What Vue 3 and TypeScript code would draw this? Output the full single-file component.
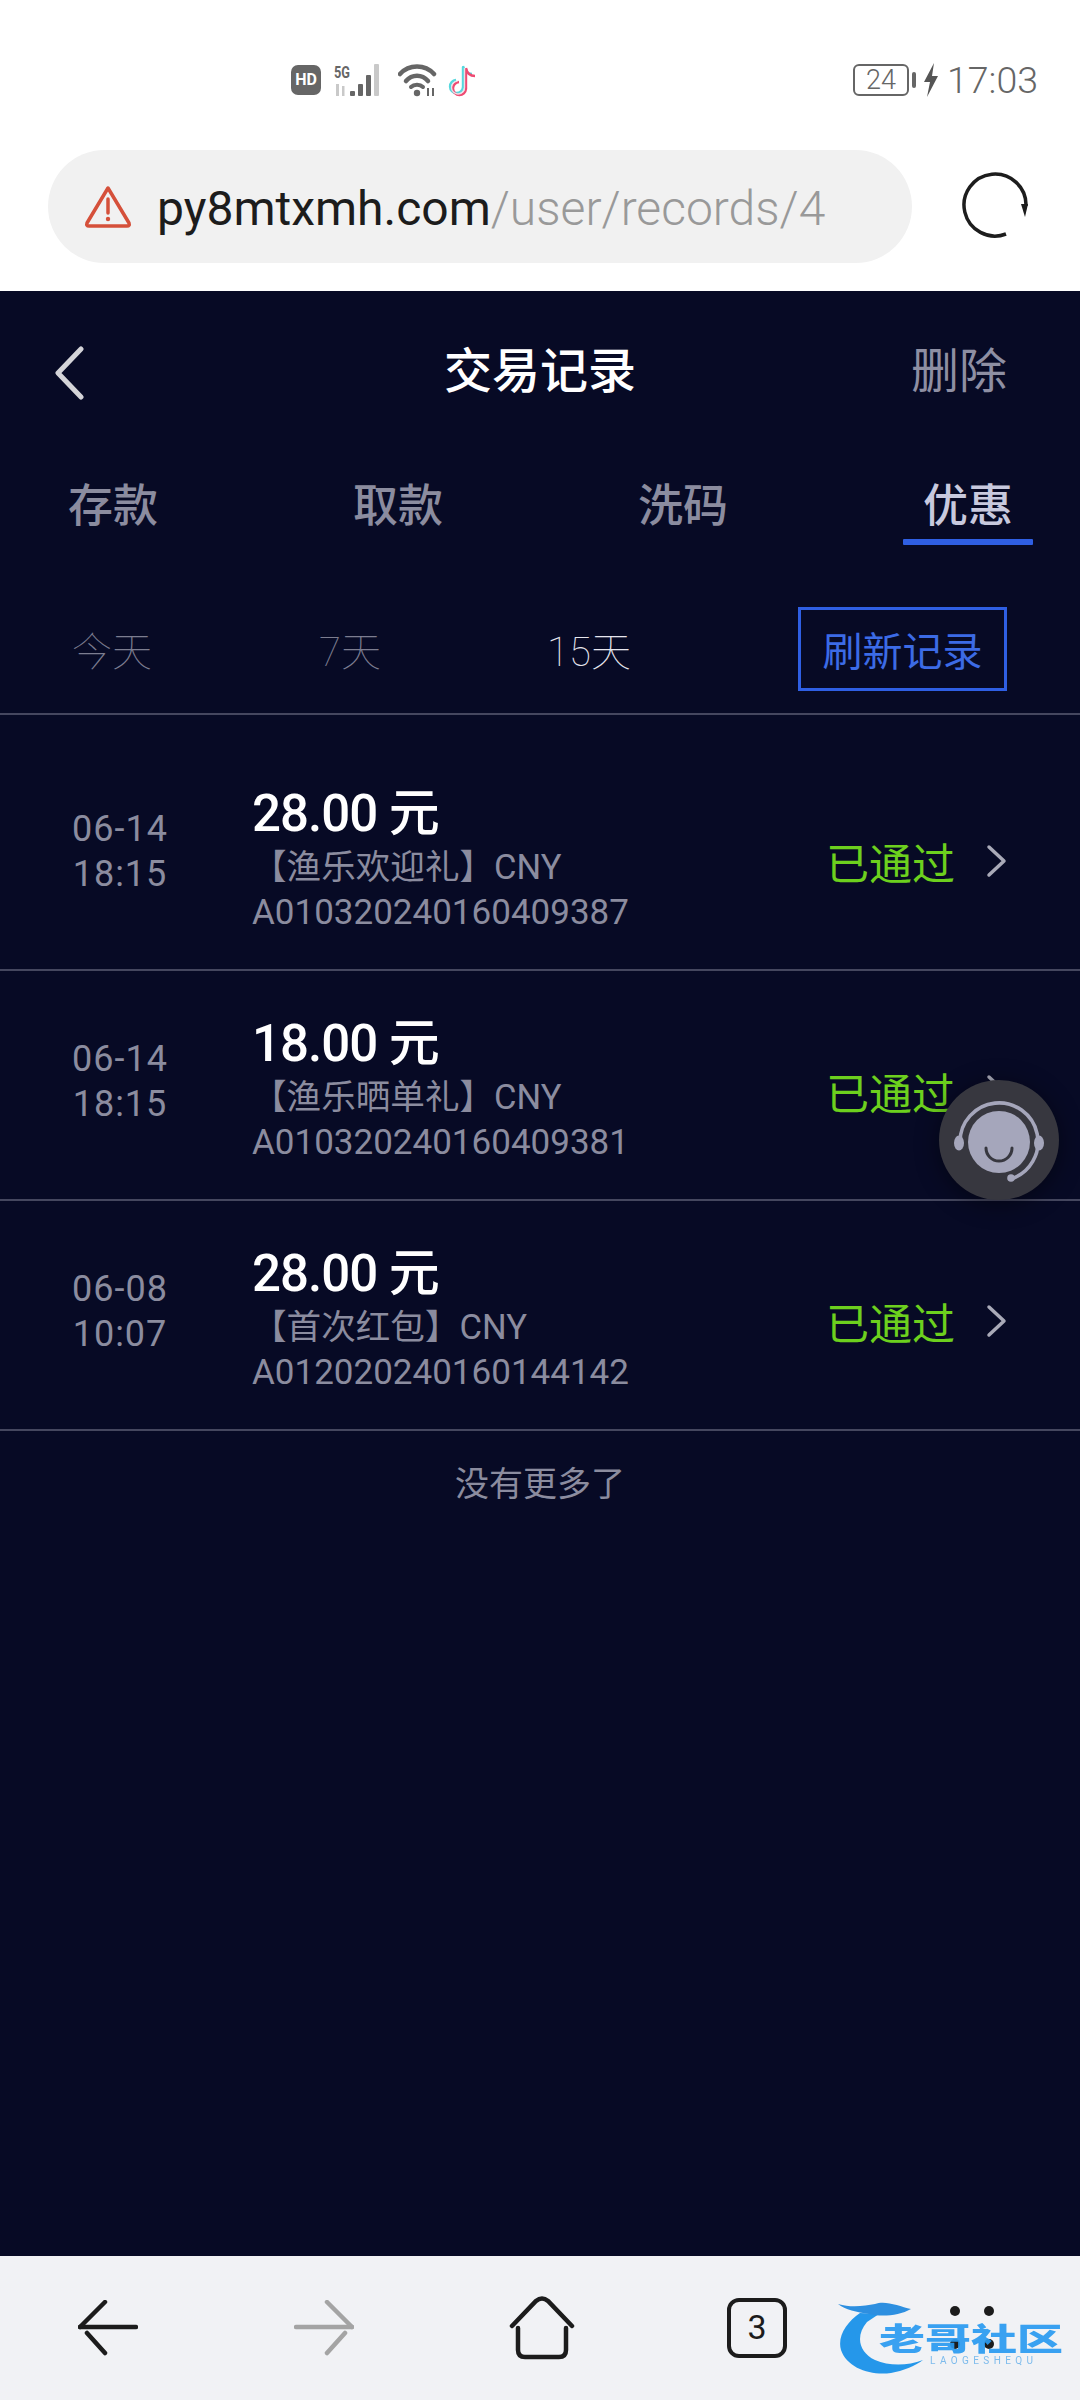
<script setup lang="ts">
interface RecordRow {
  date: string
  time: string
  amount: string
  name: string
  code: string
}

const tabs = ['存款', '取款', '洗码', '优惠']
const activeTab = '优惠'

const ranges = [
  { label: '今天', on: false },
  { label: '7天', on: false },
  { label: '15天', on: true },
]

const rows: RecordRow[] = [
  { date: '06-14', time: '18:15', amount: '28.00 元', name: '【渔乐欢迎礼】CNY', code: 'A010320240160409387' },
  { date: '06-14', time: '18:15', amount: '18.00 元', name: '【渔乐晒单礼】CNY', code: 'A010320240160409381' },
  { date: '06-08', time: '10:07', amount: '28.00 元', name: '【首次红包】CNY', code: 'A012020240160144142' },
]
</script>

<template>
  <div class="page">
    <!-- 系统状态栏 -->
    <div class="status-bar">
      <div class="status-icons">
        <span class="hd">HD</span>
        <svg class="signal" width="52" height="36" viewBox="0 0 52 36">
          <text x="0" y="16" font-size="16" font-weight="700" fill="#666" font-family="Roboto, sans-serif" textLength="16" lengthAdjust="spacingAndGlyphs">5G</text>
          <g fill="#c9c9c9">
            <rect x="2" y="22" width="3" height="12" />
            <rect x="8" y="24" width="2.5" height="10" />
          </g>
          <rect x="16" y="29" width="5" height="5" rx="1" fill="#666" />
          <rect x="24" y="22" width="5" height="12" rx="1" fill="#666" />
          <rect x="32" y="13" width="5" height="21" rx="1" fill="#666" />
          <rect x="40" y="2" width="5" height="32" rx="1" fill="#c9c9c9" />
        </svg>
        <svg class="wifi" width="40" height="34" viewBox="0 0 40 34" fill="none" stroke="#666" stroke-linecap="round">
          <path d="M2 11 C11 1 27 1 36 11" stroke-width="4.5" />
          <path d="M8 18 C14 11 24 11 30 18" stroke-width="4.5" />
          <path d="M13 24 C16 21 22 21 25 24" stroke-width="4" />
          <circle cx="19" cy="30" r="3.2" fill="#666" stroke="none" />
          <path d="M30 25 V33 M35 25 V33" stroke-width="2" stroke-linecap="butt" />
        </svg>
        <svg class="tiktok" width="28" height="34" viewBox="0 0 28 34" fill="none" stroke-width="2.4">
          <path d="M15 4 V24 A6.5 6.5 0 1 1 8 17" stroke="#55d8de" />
          <path d="M15 3 C16 8 19 11 24 11" stroke="#55d8de" />
          <path d="M18 6 V26 A6.5 6.5 0 1 1 11 19" stroke="#ee4a72" />
          <path d="M18 5 C19 10 22 13 27 13" stroke="#ee4a72" />
          <path d="M16.5 5 V25 A6.5 6.5 0 1 1 9.5 18" stroke="#e9dfe6" stroke-width="1.4" />
        </svg>
      </div>
      <div class="status-right">
        <span class="battery"><span class="battery-num">24</span></span>
        <span class="battery-cap"></span>
        <svg class="bolt" width="16" height="34" viewBox="0 0 16 34">
          <path d="M11 0 L1 19 H7 L4 34 L15 13 H9 Z" fill="#555" />
        </svg>
        <span class="clock">17:03</span>
      </div>
    </div>

    <!-- 浏览器地址栏 -->
    <div class="address-bar">
      <div class="url-pill">
        <svg class="warn" width="48" height="44" viewBox="0 0 48 44" fill="none">
          <path d="M24 3 L45 38 Q46 41 43 41 H5 Q2 41 3 38 Z" stroke="#d5503a" stroke-width="3.5" stroke-linejoin="round" />
          <path d="M24 14 V28" stroke="#d5503a" stroke-width="3.5" stroke-linecap="round" />
          <circle cx="24" cy="34" r="2.2" fill="#d5503a" />
        </svg>
        <span class="url"><span class="url-host">py8mtxmh.com</span>/user/records/4</span>
      </div>
      <svg class="reload" width="70" height="70" viewBox="0 0 70 70" fill="none">
        <path d="M46 63 A31 31 0 1 1 66 35" stroke="#1d1d1d" stroke-width="3.5" />
        <path d="M61 33 H68 L65 46 Z" fill="#1d1d1d" />
      </svg>
    </div>

    <div class="content">
      <div class="nav">
        <svg class="back" width="36" height="54" viewBox="0 0 36 54" fill="none">
          <path d="M30 3 L7 27 L30 51" stroke="#d4d4d8" stroke-width="5" stroke-linecap="round" stroke-linejoin="round" />
        </svg>
        <span class="nav-title">交易记录</span>
        <span class="nav-action">删除</span>
      </div>

      <div class="tabs">
        <div v-for="tab in tabs" :key="tab" class="tab" :class="{ active: tab === activeTab }">
          <span>{{ tab }}</span>
          <i class="tab-line"></i>
        </div>
      </div>

      <div class="filters">
        <div class="ranges">
          <span v-for="r in ranges" :key="r.label" class="range" :class="{ on: r.on }">{{ r.label }}</span>
        </div>
        <button class="refresh" type="button">刷新记录</button>
      </div>

      <div class="list">
        <div v-for="row in rows" :key="row.code" class="row">
          <div class="when">
            <div>{{ row.date }}</div>
            <div>{{ row.time }}</div>
          </div>
          <div class="info">
            <div class="amount">{{ row.amount }}</div>
            <div class="name">{{ row.name }}</div>
            <div class="code">{{ row.code }}</div>
          </div>
          <span class="state">已通过</span>
          <svg class="arrow" width="24" height="36" viewBox="0 0 24 36" fill="none">
            <path d="M4 4 L19 18 L4 32" stroke="#a9aab8" stroke-width="3.5" stroke-linecap="round" stroke-linejoin="round" />
          </svg>
        </div>
      </div>

      <div class="no-more">没有更多了</div>
    </div>

    <!-- 浏览器底部工具栏 -->
    <div class="toolbar">
      <svg width="60" height="56" viewBox="0 0 60 56" fill="none" stroke="#1c1c1c" stroke-width="4.5" stroke-linecap="round" class="tool tool-back">
        <path d="M2 27 H58" />
        <path d="M2 27 L27 2" />
        <path d="M9 33 L27 53" />
      </svg>
      <svg width="60" height="56" viewBox="0 0 60 56" fill="none" stroke="#a4a4a4" stroke-width="4.5" stroke-linecap="round" class="tool tool-forward">
        <path d="M58 27 H2" />
        <path d="M58 27 L33 2" />
        <path d="M51 33 L33 53" />
      </svg>
      <svg width="66" height="64" viewBox="0 0 66 64" fill="none" stroke="#1c1c1c" stroke-width="4.5" stroke-linecap="round" class="tool tool-home">
        <path d="M3 30 L27 5 Q33 0 39 5 L63 30" />
        <path d="M9 32 V54 Q9 61 16 61 H50 Q57 61 57 54 V32" />
      </svg>
      <div class="tab-count">3</div>
    </div>

    <!-- 悬浮客服按钮 -->
    <div class="service">
      <svg width="120" height="120" viewBox="0 0 120 120" fill="none">
        <circle cx="60" cy="62" r="31" fill="#a5a6bb" />
        <path d="M21 62 A39 39 0 1 1 72 99" stroke="#a5a6bb" stroke-width="3.6" />
        <ellipse cx="20" cy="63" rx="5" ry="7.5" fill="#a5a6bb" />
        <ellipse cx="100" cy="63" rx="5" ry="7.5" fill="#a5a6bb" />
        <circle cx="72" cy="98" r="3.8" fill="#a5a6bb" />
        <path d="M47 68 A13 13 0 0 0 73 68" stroke="#37373f" stroke-width="3" stroke-linecap="round" />
      </svg>
    </div>

    <!-- 菜单四点与水印 -->
    <div class="menu-dots"><i></i><i></i><i></i><i></i></div>
    <div class="mark">
      <svg class="mark-dragon" width="125" height="78" viewBox="0 0 125 78" fill="none">
        <path d="M23 15 C10 24 0 38 4 52 C10 70 34 78 54 75 C66 73 78 68 86 62 C70 68 52 68 38 62 C22 54 18 38 30 24 L42 16 Z" fill="#2597ea" />
        <path d="M1 6 C14 10 28 8 38 6 C48 2 62 8 74 11 C62 18 44 19 32 16 C20 14 8 12 1 6 Z" fill="#2d8fe0" />
      </svg>
      <div class="mark-name">老哥社区</div>
      <div class="mark-sub">LAOGESHEQU</div>
    </div>
  </div>
</template>

<style scoped>
.page {
  position: relative;
  width: 1080px;
  height: 2400px;
  display: flex;
  flex-direction: column;
  overflow: hidden;
  background: #fff;
  font-family: Roboto, "Noto Sans CJK SC", sans-serif;
}

.status-bar {
  height: 150px;
  flex: none;
  box-sizing: border-box;
  padding: 62px 42px 0 291px;
  display: flex;
  justify-content: space-between;
  align-items: flex-start;
}
.status-icons {
  display: flex;
  align-items: center;
  height: 36px;
}
.hd {
  width: 30px;
  height: 30px;
  border-radius: 7px;
  background: #666;
  color: #fff;
  font-size: 16px;
  font-weight: 700;
  line-height: 30px;
  text-align: center;
  margin-right: 13px;
}
.signal { margin-right: 12px; }
.wifi { margin-right: 10px; }
.status-right {
  display: flex;
  align-items: center;
  height: 36px;
}
.battery {
  box-sizing: border-box;
  width: 56px;
  height: 32px;
  border: 2.5px solid #666;
  border-radius: 6px;
  display: flex;
  align-items: center;
  justify-content: center;
}
.battery-num {
  color: #666;
  font-size: 27px;
  font-weight: 300;
}
.battery-cap {
  width: 4px;
  height: 16px;
  background: #666;
  border-radius: 2px;
  margin: 0 7px 0 3px;
}
.bolt { margin-right: 8px; }
.clock {
  color: #666;
  font-size: 37.5px;
  font-weight: 300;
}

.address-bar {
  height: 141px;
  flex: none;
  display: flex;
  align-items: flex-start;
  padding: 0 50px 0 48px;
  justify-content: space-between;
}
.url-pill {
  width: 864px;
  height: 113px;
  box-sizing: border-box;
  padding-left: 36px;
  border-radius: 57px;
  background: #f1f1f1;
  display: flex;
  align-items: center;
}
.url {
  margin-left: 25px;
  padding-top: 3px;
  font-size: 48px;
  font-weight: 300;
  color: #999;
  white-space: nowrap;
}
.url-host {
  color: #1c1c1c;
  font-weight: 400;
}
.reload { margin-top: 21px; }

.content {
  flex: 1;
  background: #070a25;
  display: flex;
  flex-direction: column;
}

.nav {
  position: relative;
  box-sizing: border-box;
  height: 185px;
  padding: 0 73px 33px 48px;
  flex: none;
  display: flex;
  align-items: center;
  justify-content: flex-end;
}
.back {
  margin-top: 12px;
  margin-left: 3px;
  margin-right: auto;
}
.nav-title {
  position: absolute;
  left: 0;
  right: 0;
  text-align: center;
  color: #fff;
  font-size: 48px;
  font-weight: 500;
}
.nav-action {
  color: #8e8fa3;
  font-size: 48px;
}

.tabs {
  flex: none;
  display: flex;
  justify-content: space-between;
  padding: 0 47px 0 48px;
}
.tab {
  width: 130px;
  display: flex;
  flex-direction: column;
  align-items: center;
  color: #8b8c9f;
  font-size: 45px;
  font-weight: 500;
  line-height: 62px;
}
.tab-line {
  width: 100%;
  height: 6px;
  margin-top: 1px;
  border-radius: 1px;
}
.tab.active { color: #c8c9de; }
.tab.active .tab-line { background: #2f5fe3; }

.filters {
  flex: none;
  box-sizing: border-box;
  height: 170px;
  padding: 62px 73px 0 0;
  display: flex;
  align-items: flex-start;
  justify-content: space-between;
  border-bottom: 2px solid #45475f;
}
.ranges {
  display: grid;
  grid-template-columns: 224px 252px 226px;
  height: 84px;
  align-items: center;
}
.range {
  text-align: center;
  color: #7c7d90;
  font-size: 40px;
  font-weight: 100;
}
.range.on { color: #e6e6ee; }
.refresh {
  box-sizing: border-box;
  width: 209px;
  height: 84px;
  padding: 0;
  background: transparent;
  border: 3px solid #2f5fe3;
  color: #3c6be6;
  font-family: inherit;
  font-size: 40px;
}

.list {
  flex: none;
  padding-top: 26px;
}
.row {
  box-sizing: border-box;
  height: 230px;
  display: flex;
  align-items: center;
  padding-right: 71px;
  border-bottom: 2px solid #45475f;
}
.when {
  width: 240px;
  margin-right: 12px;
  padding-bottom: 6px;
  text-align: center;
  color: #8b8c9f;
  font-size: 36px;
  letter-spacing: 1px;
  line-height: 45px;
}
.info {
  flex: 1;
  min-width: 0;
  padding-top: 6px;
}
.amount {
  color: #fff;
  font-size: 51px;
  font-weight: 500;
  line-height: 63px;
  letter-spacing: -1px;
}
.name,
.code {
  color: #8b8c9f;
  line-height: 45px;
}
.name { font-size: 34.6px; }
.code { font-size: 35px; }
.state {
  margin-top: 12px;
  color: #6dd01e;
  font-size: 43px;
  margin-right: 30px;
}
.arrow {
  flex: none;
  margin-top: 12px;
}

.no-more {
  margin-top: 29px;
  text-align: center;
  color: #8b8c9f;
  font-size: 34px;
  line-height: 48px;
}

.toolbar {
  height: 144px;
  flex: none;
  background: #f1f2f5;
  display: flex;
  align-items: center;
  padding-left: 78px;
}
.tool { flex: none; }
.tool-forward { margin-left: 156px; }
.tool-home { margin: 0 0 0 155px; }
.tab-count {
  box-sizing: border-box;
  width: 60px;
  height: 60px;
  margin-left: 152px;
  border: 4.5px solid #1c1c1c;
  border-radius: 12px;
  color: #1c1c1c;
  font-size: 34px;
  line-height: 51px;
  text-align: center;
}

.service {
  position: absolute;
  left: 939px;
  top: 1080px;
  width: 120px;
  height: 120px;
  border-radius: 50%;
  background: #37373f;
  box-shadow: 0 4px 24px rgba(0, 0, 0, 0.45);
}

.menu-dots {
  position: absolute;
  left: 950px;
  top: 2306px;
  width: 44px;
  display: grid;
  grid-template-columns: 10px 10px;
  justify-content: space-between;
  row-gap: 23px;
}
.menu-dots i {
  width: 10px;
  height: 10px;
  border-radius: 50%;
  background: #1c1c1c;
}

.mark {
  position: absolute;
  left: 837px;
  top: 2298px;
  width: 226px;
  height: 78px;
  filter: blur(0.7px);
}
.mark-dragon {
  position: absolute;
  left: 0;
  top: 0;
}
.mark-name {
  position: absolute;
  left: 42px;
  top: 16px;
  color: #2a9bf0;
  opacity: 0.92;
  font-size: 46px;
  font-weight: 900;
  line-height: 50px;
  white-space: nowrap;
  transform: scaleY(0.66);
}
.mark-sub {
  position: absolute;
  left: 93px;
  top: 58px;
  color: #7dbbec;
  font-size: 10px;
  letter-spacing: 4.4px;
  line-height: 10px;
}
</style>
